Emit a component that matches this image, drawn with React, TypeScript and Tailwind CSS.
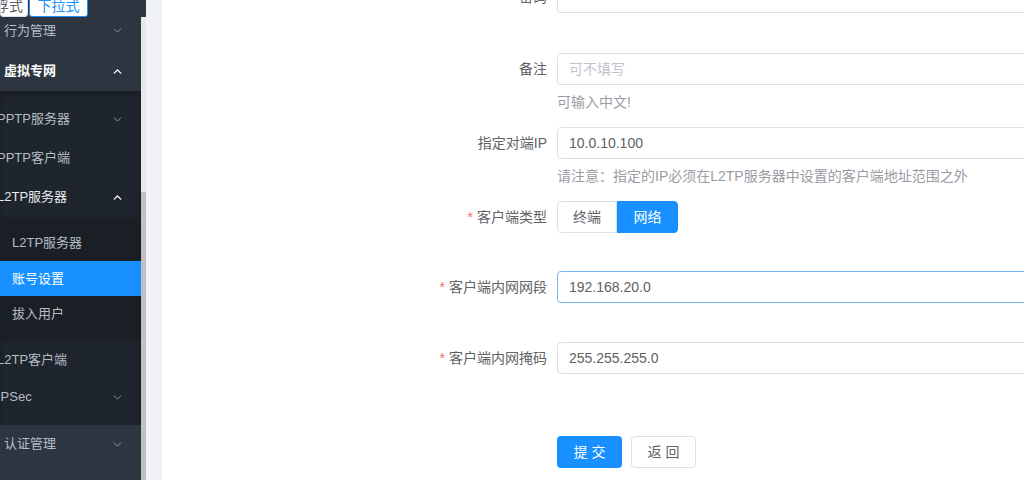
import React from 'react';
import { ChevronDown, ChevronUp } from 'lucide-react';

type Item = {
  label: string;
  level: 1 | 2 | 3;
  h: number;
  arrow?: 'down' | 'up';
  active?: boolean;
  open?: boolean;
};

// 左侧菜单缩进（页面本身有一点水平滚动，所以二级菜单文字被截掉一点）
const INDENT: Record<number, string> = {
  1: 'pl-[4px]',
  2: 'pl-0 -ml-[3px]',
  3: 'pl-[12px]',
};

function MenuRow({ item }: { item: Item }) {
  const color = item.active
    ? 'bg-[#1890ff] text-white'
    : item.open
      ? item.level === 1
        ? 'text-white font-bold'
        : 'text-[#e6e9ed]'
      : 'text-[#b4bcc6]';
  return (
    <div
      className={`flex items-center justify-between pr-[17px] text-[13px] ${color}`}
      style={{ height: item.h }}
    >
      <span className={`whitespace-nowrap ${INDENT[item.level]}`}>{item.label}</span>
      {item.arrow === 'down' && <ChevronDown size={13} strokeWidth={1.6} className="text-[#9aa3ad]" />}
      {item.arrow === 'up' && <ChevronUp size={13} strokeWidth={2.6} className="text-white" />}
    </div>
  );
}

function Sidebar() {
  return (
    <aside className="w-[146px] h-full shrink-0 flex flex-col bg-[#2c3540] overflow-hidden">
      {/* 顶部 菜单样式切换 */}
      <div className="h-[17px] shrink-0 flex gap-[1px] overflow-hidden">
        <div className="w-[28px] h-[22px] -mt-[5px] bg-white border border-[#dcdfe6] rounded-b-[3px] text-[14px] leading-[20px] text-[#606266] whitespace-nowrap overflow-hidden">
          <span className="-ml-[6px] inline-block">浮式</span>
        </div>
        <div className="w-[59px] h-[22px] -mt-[5px] bg-white border border-[#1890ff] rounded-b-[3px] text-[14px] leading-[20px] text-[#1890ff] text-center">
          下拉式
        </div>
      </div>

      <div className="flex-1 flex min-h-0">
        <div className="w-[141px] flex flex-col">
          <div className="h-[34px] flex items-center justify-between pr-[17px] pb-[7px] text-[13px] text-[#b4bcc6]">
            <span className="pl-[4px]">行为管理</span>
            <ChevronDown size={13} strokeWidth={1.6} className="text-[#9aa3ad]" />
          </div>
          <MenuRow item={{ label: '虚拟专网', level: 1, h: 40, arrow: 'up', open: true }} />

          {/* 二级菜单 */}
          <div className="bg-[#1f252c] py-[9px] shadow-[inset_0_3px_4px_rgba(0,0,0,0.25)]">
            <MenuRow item={{ label: 'PPTP服务器', level: 2, h: 38, arrow: 'down' }} />
            <MenuRow item={{ label: 'PPTP客户端', level: 2, h: 39 }} />
            <MenuRow item={{ label: 'L2TP服务器', level: 2, h: 40, arrow: 'up', open: true }} />

            {/* 三级菜单 */}
            <div className="bg-[#1a1f25] pt-[8px] pb-[9px]">
              <MenuRow item={{ label: 'L2TP服务器', level: 3, h: 36 }} />
              <MenuRow item={{ label: '账号设置', level: 3, h: 35, active: true }} />
              <MenuRow item={{ label: '拔入用户', level: 3, h: 36 }} />
            </div>

            <MenuRow item={{ label: 'L2TP客户端', level: 2, h: 37 }} />
            <MenuRow item={{ label: 'IPSec', level: 2, h: 38, arrow: 'down' }} />
          </div>

          <MenuRow item={{ label: '认证管理', level: 1, h: 38, arrow: 'down' }} />
        </div>

        {/* 滚动条 */}
        <div className="w-[5px] bg-[#e8e8e8] flex flex-col">
          <div className="h-[175px] shrink-0" />
          <div className="flex-1 bg-[#c1c1c1]" />
        </div>
      </div>
    </aside>
  );
}

function FormRow({
  label,
  required,
  children,
  className = '',
}: {
  label: string;
  required?: boolean;
  children: React.ReactNode;
  className?: string;
}) {
  return (
    <div className={`flex items-start ${className}`}>
      <label className="w-[395px] shrink-0 pr-[10px] text-right text-[14px] leading-[32px] text-[#606266]">
        {required && <span className="text-[#f56c6c] mr-[4px]">*</span>}
        {label}
      </label>
      {children}
    </div>
  );
}

function TextBox({ value, placeholder, focused }: { value?: string; placeholder?: string; focused?: boolean }) {
  return (
    <input
      defaultValue={value}
      placeholder={placeholder}
      className={`w-[520px] shrink-0 h-[32px] px-[11px] rounded-[4px] border bg-white text-[14px] text-[#606266] placeholder:text-[#c0c4cc] outline-none ${
        focused ? 'border-[#7ab4ee]' : 'border-[#dcdfe6]'
      }`}
    />
  );
}

function Help({ children, className = '' }: { children: React.ReactNode; className?: string }) {
  return (
    <div className={`pl-[395px] text-[14px] leading-[20px] text-[#9a9ca3] whitespace-nowrap ${className}`}>
      {children}
    </div>
  );
}

export default function App() {
  return (
    <div className="w-[1024px] h-[480px] flex overflow-hidden bg-[#f0f2f5] font-['Liberation_Sans','Noto_Sans_CJK_SC',sans-serif]">
      <Sidebar />

      <main className="flex-1 pl-[16px] overflow-hidden">
        <div className="h-full bg-white overflow-hidden">
          <div className="-mt-[19px]">
            <FormRow label="密码" required>
              <TextBox value="" />
            </FormRow>

            <FormRow label="备注" className="mt-[40px]">
              <TextBox placeholder="可不填写" />
            </FormRow>
            <Help className="mt-[7px]">可输入中文!</Help>

            <FormRow label="指定对端IP" className="mt-[15px]">
              <TextBox value="10.0.10.100" />
            </FormRow>
            <Help className="mt-[7px]">请注意：指定的IP必须在L2TP服务器中设置的客户端地址范围之外</Help>

            <FormRow label="客户端类型" required className="mt-[15px]">
              <div className="flex text-[14px] leading-[30px]">
                <span className="w-[60px] h-[32px] text-center border border-[#dcdfe6] rounded-l-[4px] text-[#606266] bg-white">
                  终端
                </span>
                <span className="w-[61px] h-[32px] text-center border border-[#1890ff] rounded-r-[4px] text-white bg-[#1890ff]">
                  网络
                </span>
              </div>
            </FormRow>

            <FormRow label="客户端内网网段" required className="mt-[38px]">
              <TextBox value="192.168.20.0" focused />
            </FormRow>

            <FormRow label="客户端内网掩码" required className="mt-[39px]">
              <TextBox value="255.255.255.0" />
            </FormRow>

            <div className="mt-[62px] pl-[395px] flex gap-[9px] text-[14px]">
              <button className="w-[65px] h-[32px] rounded-[4px] bg-[#1890ff] text-white tracking-[4px] pl-[4px]">
                提交
              </button>
              <button className="w-[65px] h-[32px] rounded-[4px] border border-[#dcdfe6] bg-white text-[#606266] tracking-[4px] pl-[4px]">
                返回
              </button>
            </div>
          </div>
        </div>
      </main>
    </div>
  );
}
